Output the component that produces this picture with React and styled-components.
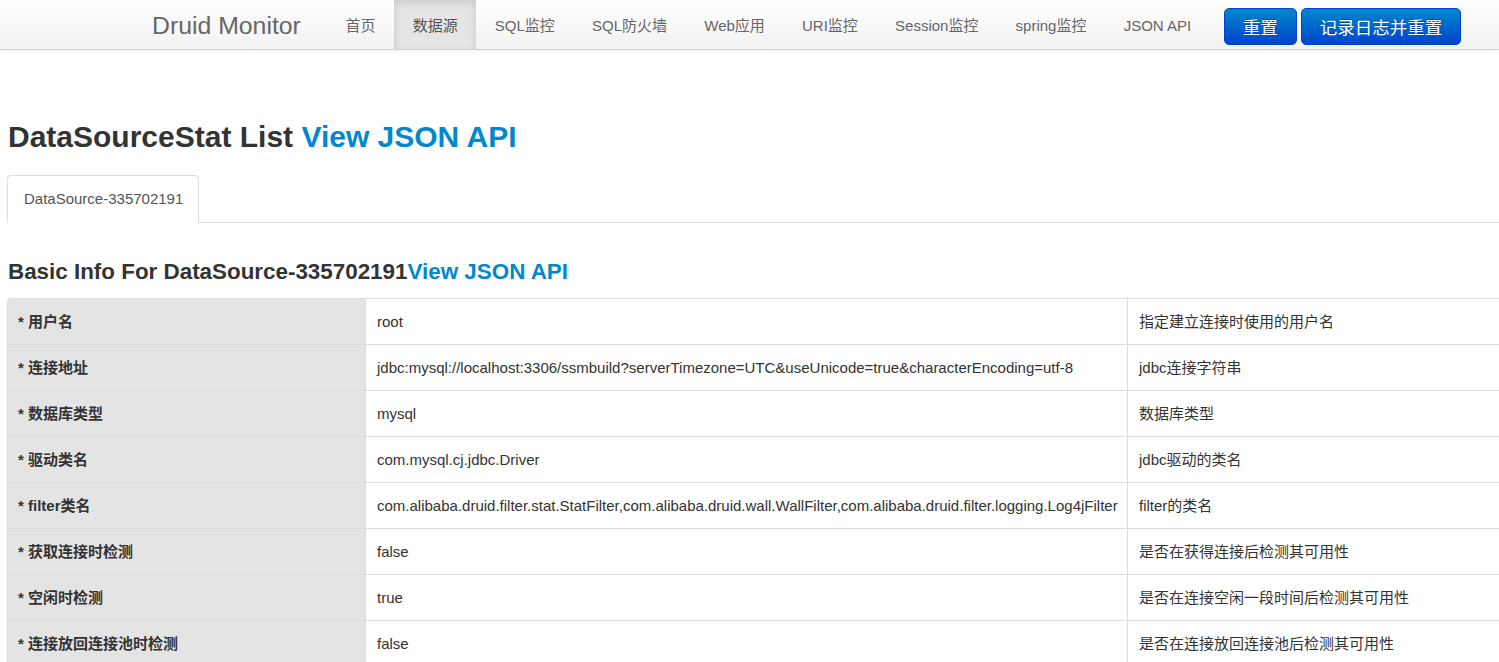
import React from "react";
import styled, { createGlobalStyle } from "styled-components";

const Global = createGlobalStyle`
  html, body { margin: 0; padding: 0; overflow: hidden; background: #fff; }
  body {
    font-family: "Liberation Sans", Arial, "Noto Sans CJK SC", sans-serif;
    font-size: 15px;
    line-height: 20px;
    color: #333;
  }
`;

const NavBar = styled.div`
  height: 49px;
  background: linear-gradient(to bottom, #ffffff, #f2f2f2);
  border-bottom: 1px solid #d4d4d4;
  box-shadow: 0 1px 4px rgba(0, 0, 0, 0.065);
  display: flex;
  align-items: stretch;
  padding-left: 152px;
`;

const Brand = styled.a`
  display: flex;
  align-items: center;
  font-size: 24.8px;
  color: #666;
  margin-right: 26px;
  text-decoration: none;
  padding-top: 2px;
`;

const NavList = styled.ul`
  list-style: none;
  margin: 0;
  padding: 0;
  display: flex;
`;

const NavItem = styled.li`
  display: flex;
  align-items: center;
  padding: 2px 18.6px 0;
  font-size: 15px;
  color: ${(p) => (p.$active ? "#555" : "#666")};
  background: ${(p) => (p.$active ? "#e5e5e5" : "transparent")};
  box-shadow: ${(p) => (p.$active ? "inset 0 3px 8px rgba(0,0,0,0.125)" : "none")};
`;

const Buttons = styled.div`
  display: flex;
  gap: 4px;
  align-items: flex-start;
  margin-left: 14px;
  padding-top: 8px;
`;

const PrimaryButton = styled.button`
  height: 37px;
  padding: 0 18px;
  font-family: "Liberation Sans", "Noto Sans CJK SC", sans-serif;
  font-size: 17.5px;
  color: #fff;
  border: 1px solid #0044cc;
  border-radius: 5px;
  background: linear-gradient(to bottom, #0088cc, #0044cc);
  text-shadow: 0 -1px 0 rgba(0, 0, 0, 0.25);
  cursor: pointer;
`;

const Content = styled.div`
  padding: 70px 7px 0 7px;
  width: 1620px;
`;

const Title = styled.h1`
  margin: 0 0 22px 1px;
  font-size: 30px;
  line-height: 33px;
  font-weight: bold;
  color: #333;
`;

const Link = styled.a`
  color: #0088cc;
  text-decoration: none;
`;

const Tabs = styled.ul`
  list-style: none;
  margin: 0;
  padding: 0;
  display: flex;
  border-bottom: 1px solid #ddd;
`;

const Tab = styled.li`
  margin-bottom: -1px;
  padding: 13px 15px 13px 16px;
  border: 1px solid #ddd;
  border-bottom-color: #fff;
  border-radius: 4px 4px 0 0;
  background: #fff;
  color: #555;
  font-size: 15px;
  line-height: 20px;
`;

const SubTitle = styled.h3`
  margin: 37px 0 14px 1px;
  font-size: 22.4px;
  line-height: 24px;
  font-weight: bold;
  color: #333;
`;

const Table = styled.table`
  width: 100%;
  table-layout: fixed;
  border-collapse: separate;
  border-spacing: 0;
  border: 1px solid #ddd;
  border-left: 0;
  border-radius: 4px 0 0 0;
`;

const Row = styled.tr``;

const HeadCell = styled.th`
  width: 337px;
  text-align: left;
  background: #e4e4e4;
  font-weight: bold;
  padding: 12px 10px;
  line-height: 21px;
  border-left: 1px solid #ddd;
  border-top: ${(p) => (p.$first ? "0" : "1px solid #ddd")};
  border-top-left-radius: ${(p) => (p.$first ? "4px" : "0")};
`;

const Cell = styled.td`
  width: ${(p) => p.$w || "auto"};
  padding: 12px 10px 12px 11px;
  line-height: 21px;
  border-left: 1px solid #ddd;
  border-top: ${(p) => (p.$first ? "0" : "1px solid #ddd")};
  white-space: nowrap;
  overflow: hidden;
`;

const navItems = ["首页", "数据源", "SQL监控", "SQL防火墙", "Web应用", "URI监控", "Session监控", "spring监控", "JSON API"];

const rows = [
  ["* 用户名", "root", "指定建立连接时使用的用户名"],
  ["* 连接地址", "jdbc:mysql://localhost:3306/ssmbuild?serverTimezone=UTC&useUnicode=true&characterEncoding=utf-8", "jdbc连接字符串"],
  ["* 数据库类型", "mysql", "数据库类型"],
  ["* 驱动类名", "com.mysql.cj.jdbc.Driver", "jdbc驱动的类名"],
  ["* filter类名", "com.alibaba.druid.filter.stat.StatFilter,com.alibaba.druid.wall.WallFilter,com.alibaba.druid.filter.logging.Log4jFilter", "filter的类名"],
  ["* 获取连接时检测", "false", "是否在获得连接后检测其可用性"],
  ["* 空闲时检测", "true", "是否在连接空闲一段时间后检测其可用性"],
  ["* 连接放回连接池时检测", "false", "是否在连接放回连接池后检测其可用性"],
  ["* 初始化连接数", "0", "初始化连接数"],
];

export default function App() {
  return (
    <>
      <Global />
      <NavBar>
        <Brand>Druid Monitor</Brand>
        <NavList>
          {navItems.map((n) => (
            <NavItem key={n} $active={n === "数据源"}>{n}</NavItem>
          ))}
        </NavList>
        <Buttons>
          <PrimaryButton>重置</PrimaryButton>
          <PrimaryButton>记录日志并重置</PrimaryButton>
        </Buttons>
      </NavBar>
      <Content>
        <Title>
          DataSourceStat List <Link>View JSON API</Link>
        </Title>
        <Tabs>
          <Tab>DataSource-335702191</Tab>
        </Tabs>
        <SubTitle>
          Basic Info For DataSource-335702191<Link>View JSON API</Link>
        </SubTitle>
        <Table>
          <tbody>
            {rows.map((r, i) => (
              <Row key={i}>
                <HeadCell $first={i === 0}>{r[0]}</HeadCell>
                <Cell $first={i === 0} $w="740px">{r[1]}</Cell>
                <Cell $first={i === 0}>{r[2]}</Cell>
              </Row>
            ))}
          </tbody>
        </Table>
      </Content>
    </>
  );
}
